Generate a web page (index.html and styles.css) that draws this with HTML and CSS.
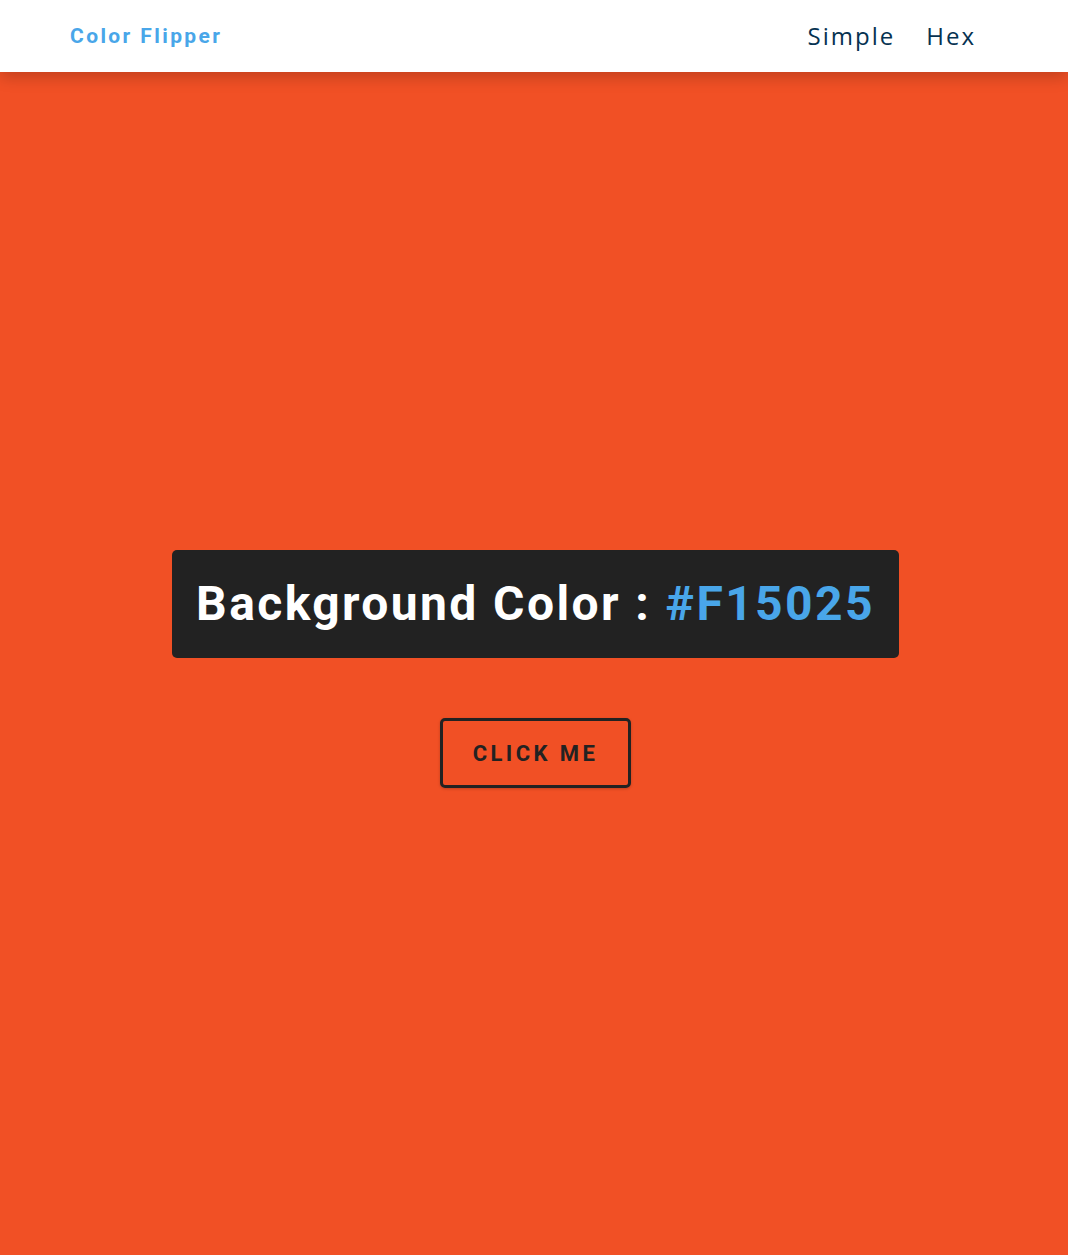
FILE: index.html
```html
<!DOCTYPE html>
<html lang="en">
<head>
<meta charset="utf-8">
<title>Color Flipper</title>
<link rel="stylesheet" href="styles.css">
</head>
<body>
<nav class="nav">
  <h4 class="logo">Color Flipper</h4>
  <ul class="nav-links">
    <li><a href="#">Simple</a></li>
    <li><a href="#">Hex</a></li>
  </ul>
</nav>
<main class="main">
  <div class="container">
    <h2 class="title">Background Color : <span class="color">#F15025</span></h2>
    <button class="btn-hero" type="button">click me</button>
  </div>
</main>
</body>
</html>
```
FILE: styles.css
```css
* { box-sizing: border-box; margin: 0; padding: 0; }
html, body { height: 100%; }
body {
  font-family: Roboto, "Open Sans", sans-serif;
  background: #F15025;
  color: #222;
}
.nav {
  height: 72px;
  background: #fff;
  box-shadow: 0 5px 15px rgba(0, 0, 0, 0.2);
  display: flex;
  align-items: center;
  justify-content: space-between;
  padding: 0 92px 0 70px;
  position: relative;
  z-index: 1;
}
.logo {
  font-family: Roboto, sans-serif;
  font-size: 21px;
  font-weight: 700;
  color: #49a6e9;
  letter-spacing: 2.4px;
}
.nav-links {
  list-style: none;
  display: flex;
  gap: 31px;
}
.nav-links a {
  font-family: "Open Sans", sans-serif;
  font-size: 24px;
  font-weight: 400;
  color: #063251;
  text-decoration: none;
  letter-spacing: 2px;
  position: relative;
  top: -1px;
}
.main {
  min-height: calc(100vh - 72px);
  display: flex;
  align-items: center;
  justify-content: center;
  padding-top: 11px;
  padding-left: 3px;
}
.container {
  display: flex;
  flex-direction: column;
  align-items: center;
}
.title {
  background: #222;
  color: #fff;
  font-size: 48px;
  font-weight: 700;
  line-height: 60px;
  letter-spacing: 2.4px;
  padding: 24px 24px;
  border-radius: 5px;
  margin-bottom: 60px;
}
.color { color: #49a6e9; }
.btn-hero {
  font-family: Roboto, sans-serif;
  text-transform: uppercase;
  background: transparent;
  color: #222;
  font-size: 22px;
  font-weight: 700;
  letter-spacing: 3.4px;
  width: 191px;
  height: 70px;
  border: 3px solid #222;
  border-radius: 5px;
  box-shadow: 0 1px 3px rgba(0, 0, 0, 0.2);
  cursor: pointer;
}
```
